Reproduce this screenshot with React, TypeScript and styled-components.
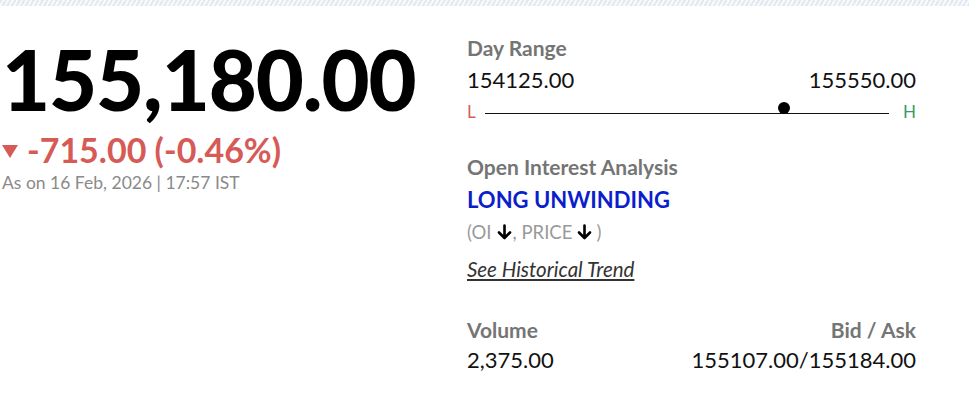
import React from "react";
import styled, { createGlobalStyle } from "styled-components";

const Global = createGlobalStyle`
  html, body { margin: 0; padding: 0; background: #fff; }
  body { font-family: Lato, "Open Sans", sans-serif; color: #111; }
`;

const Page = styled.div`
  width: 969px;
  height: 415px;
  overflow: hidden;
  background: #fff;
`;

const Hatch = styled.div`
  height: 6px;
  background: repeating-linear-gradient(
    -60deg,
    #e3e9f0 0px,
    #e3e9f0 2px,
    #f7f9fb 2px,
    #f7f9fb 4px
  );
`;

const Body = styled.div`
  display: grid;
  grid-template-columns: 467px 449px;
  padding-top: 28px;
`;

const Left = styled.div`
  display: flex;
  flex-direction: column;
  padding-left: 2px;
  padding-top: 4px;
`;

const Price = styled.div`
  font-size: 83px;
  font-weight: 900;
  line-height: 83px;
  letter-spacing: -1.1px;
  color: #000;
`;

const Change = styled.div`
  display: flex;
  align-items: center;
  gap: 9px;
  margin-top: 11px;
  color: #d65b57;
  font-size: 34px;
  line-height: 36px;
  font-weight: 700;
`;

const Tri = styled.span`
  width: 0;
  height: 0;
  border-left: 8px solid transparent;
  border-right: 8px solid transparent;
  border-top: 13px solid #d65b57;
  margin-top: 2px;
`;

const Stamp = styled.div`
  color: #8a8a8a;
  font-size: 17.5px;
  line-height: 22px;
  margin-top: 4px;
`;

const Right = styled.div`
  display: flex;
  flex-direction: column;
`;

const Label = styled.div<{ $align?: string }>`
  color: #757575;
  font-size: 21px;
  font-weight: 700;
  line-height: 28px;
  text-align: ${(p) => p.$align || "left"};
`;

const Row = styled.div<{ $mt?: number }>`
  display: flex;
  justify-content: space-between;
  margin-top: ${(p) => p.$mt || 0}px;
`;

const Value = styled.div<{ $align?: string }>`
  font-size: 22px;
  line-height: 28px;
  color: #111;
  text-align: ${(p) => p.$align || "left"};
`;

const RangeRow = styled.div`
  display: flex;
  align-items: center;
  height: 26px;
  margin-top: 4px;
`;

const Letter = styled.span<{ $c: string; $right?: boolean }>`
  color: ${(p) => p.$c};
  font-size: 17px;
  width: 18px;
  text-align: ${(p) => (p.$right ? "right" : "left")};
`;

const Track = styled.div`
  position: relative;
  flex: 1;
  height: 1px;
  background: #111;
  margin-right: 9px;
  top: 2px;
`;

const Dot = styled.span`
  position: absolute;
  width: 12px;
  height: 12px;
  border-radius: 50%;
  background: #000;
  top: -11px;
  transform: translateX(-50%);
`;

const Section = styled.div<{ $mt: number }>`
  margin-top: ${(p) => p.$mt}px;
  display: flex;
  flex-direction: column;
`;

const Signal = styled.div`
  color: #0c1ecc;
  font-size: 22px;
  font-weight: 700;
  line-height: 28px;
  margin-top: 5px;
`;

const Hint = styled.div`
  color: #9a9a9a;
  font-size: 18.5px;
  line-height: 24px;
  margin-top: 6px;
  display: flex;
  align-items: center;
`;

const Arrow = styled.svg<{ $after: number }>`
  width: 15px;
  height: 16px;
  margin: 0 ${(p) => p.$after}px 0 5px;
`;

const Link = styled.a`
  color: #333;
  font-size: 20.5px;
  font-style: italic;
  text-decoration: underline;
  line-height: 28px;
  margin-top: 11px;
  align-self: flex-start;
`;

const DownArrow = ({ after }: { after: number }) => (
  <Arrow viewBox="0 0 15 16" $after={after}>
    <path d="M7.5 1.5 V13.5 M2 8.5 L7.5 14 L13 8.5" stroke="#000" strokeWidth="2.6" fill="none" strokeLinecap="round" strokeLinejoin="round" />
  </Arrow>
);

export default function App() {
  const low = 154125;
  const high = 155550;
  const ltp = 155180;
  const pct = ((ltp - low) / (high - low)) * 100;
  return (
    <Page>
      <Global />
      <Hatch />
      <Body>
        <Left>
          <Price>155,180.00</Price>
          <Change>
            <Tri />
            <span>-715.00 (-0.46%)</span>
          </Change>
          <Stamp>As on 16 Feb, 2026 | 17:57 IST</Stamp>
        </Left>
        <Right>
          <Label>Day Range</Label>
          <Row $mt={4}>
            <Value>154125.00</Value>
            <Value $align="right">155550.00</Value>
          </Row>
          <RangeRow>
            <Letter $c="#d0605a">L</Letter>
            <Track>
              <Dot style={{ left: `${pct}%` }} />
            </Track>
            <Letter $c="#3a9a64" $right>H</Letter>
          </RangeRow>
          <Section $mt={29}>
            <Label>Open Interest Analysis</Label>
            <Signal>LONG UNWINDING</Signal>
            <Hint>
              (OI<DownArrow after={1} />, PRICE<DownArrow after={4} />)
            </Hint>
            <Link>See Historical Trend</Link>
          </Section>
          <Section $mt={33}>
            <Row>
              <Label>Volume</Label>
              <Label $align="right">Bid / Ask</Label>
            </Row>
            <Row $mt={2}>
              <Value>2,375.00</Value>
              <Value $align="right">155107.00/155184.00</Value>
            </Row>
          </Section>
        </Right>
      </Body>
    </Page>
  );
}
